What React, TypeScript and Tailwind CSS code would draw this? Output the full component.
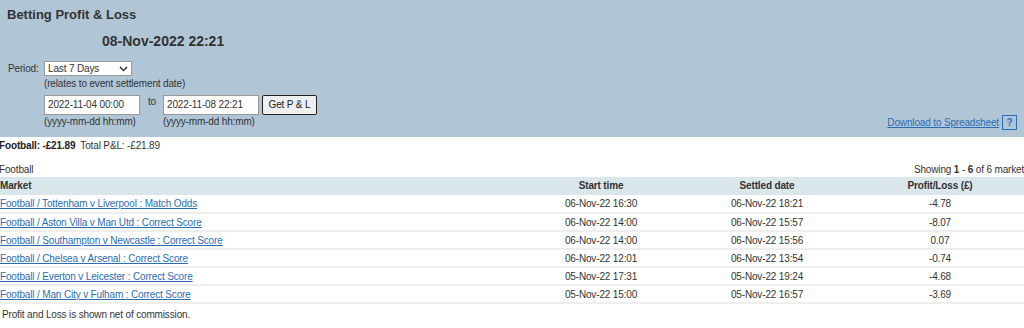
import React from "react";

const rows = [
  ["Football / Tottenham v Liverpool : Match Odds", "06-Nov-22 16:30", "06-Nov-22 18:21", "-4.78"],
  ["Football / Aston Villa v Man Utd : Correct Score", "06-Nov-22 14:00", "06-Nov-22 15:57", "-8.07"],
  ["Football / Southampton v Newcastle : Correct Score", "06-Nov-22 14:00", "06-Nov-22 15:56", "0.07"],
  ["Football / Chelsea v Arsenal : Correct Score", "06-Nov-22 12:01", "06-Nov-22 13:54", "-0.74"],
  ["Football / Everton v Leicester : Correct Score", "05-Nov-22 17:31", "05-Nov-22 19:24", "-4.68"],
  ["Football / Man City v Fulham : Correct Score", "05-Nov-22 15:00", "05-Nov-22 16:57", "-3.69"],
];

export default function App() {
  return (
    <div className="w-[1024px] h-[328px] overflow-hidden bg-white text-[#333] text-[10px] leading-[12px] tracking-[-0.15px] font-['Liberation_Sans',Arial,sans-serif]">
      <div className="bg-[#b0c6d6] h-[137px] flex flex-col relative">
        <div className="pl-[7px] pt-[7px] text-[13px] leading-[15px] font-bold tracking-normal text-[#333]">Betting Profit &amp; Loss</div>
        <div className="pl-[102px] pt-[11px] text-[14px] leading-[16px] font-bold tracking-normal text-[#333]">08-Nov-2022 22:21</div>
        <div className="flex mt-[12px] pl-[8px]">
          <div className="w-[36px] pt-[2px]">Period:</div>
          <div className="flex flex-col">
            <div className="w-[88px] h-[15px] bg-white border border-[#999] flex items-center justify-between px-[3px] shrink-0">
              <span>Last 7 Days</span>
              <svg width="9" height="6" viewBox="0 0 9 6"><path d="M1 1 L4.5 4.5 L8 1" stroke="#333" strokeWidth="1.5" fill="none" /></svg>
            </div>
            <div className="mt-[2px]">(relates to event settlement date)</div>
            <div className="flex items-start mt-[5px]">
              <div className="flex flex-col w-[96px]">
                <div className="w-[96px] h-[20px] bg-white border border-[#999] px-[3px] flex items-center">2022-11-04 00:00</div>
                <div className="mt-[1px] whitespace-nowrap">(yyyy-mm-dd hh:mm)</div>
              </div>
              <div className="w-[22px] text-center pt-[1px] ml-[1px]">to</div>
              <div className="flex flex-col w-[96px]">
                <div className="w-[96px] h-[20px] bg-white border border-[#999] px-[3px] flex items-center">2022-11-08 22:21</div>
                <div className="mt-[1px] whitespace-nowrap">(yyyy-mm-dd hh:mm)</div>
              </div>
              <div className="ml-[3px] w-[55px] h-[20px] bg-[#efefef] border border-[#222] rounded-[2px] flex items-center justify-center text-[#222]">Get P &amp; L</div>
            </div>
          </div>
        </div>
        <div className="absolute right-[7px] top-[115px] flex items-center gap-[3px]">
          <a className="text-[#2a6db5] underline">Download to Spreadsheet</a>
          <span className="w-[15px] h-[15px] border border-[#2a6db5] text-[#2a6db5] font-bold flex items-center justify-center">?</span>
        </div>
      </div>
      <div className="w-[1030px] -ml-[1px]">
        <div className="pt-[3px] flex items-baseline">
          <span className="font-bold text-[#222]">Football: -£21.89</span>
          <span className="ml-[5px]">Total P&amp;L: -£21.89</span>
        </div>
        <div className="mt-[12px] flex justify-between">
          <span>Football</span>
          <span>Showing <b>1</b> - <b>6</b> of 6 markets</span>
        </div>
        <table className="w-full border-collapse mt-[1px]">
          <thead>
            <tr className="bg-[#d9e6ea] h-[18px]">
              <th className="text-left font-bold w-[520px] pl-[1px]">Market</th>
              <th className="text-center font-bold w-[164px]">Start time</th>
              <th className="text-center font-bold w-[168px]">Settled date</th>
              <th className="text-center font-bold">Profit/Loss (£)</th>
            </tr>
          </thead>
          <tbody>
            {rows.map((r) => (
              <tr key={r[0]} className="h-[18px] border-b-2 border-[#eee]">
                <td className="pl-[1px] pt-[1px]"><a className="text-[#2a6db5] underline">{r[0]}</a></td>
                <td className="text-center pt-[1px]">{r[1]}</td>
                <td className="text-center pt-[1px]">{r[2]}</td>
                <td className="text-center pt-[1px]">{r[3]}</td>
              </tr>
            ))}
          </tbody>
        </table>
        <div className="mt-[5px] pl-[3px]">Profit and Loss is shown net of commission.</div>
      </div>
    </div>
  );
}
